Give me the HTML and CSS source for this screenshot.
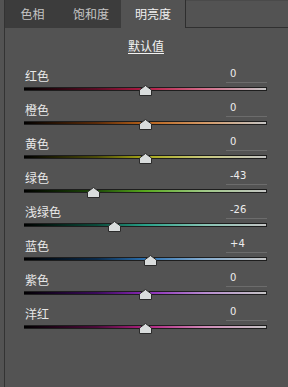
FILE: index.html
```html
<!DOCTYPE html>
<html lang="zh-CN">
    <head>
        <meta charset="UTF-8">
        <meta name="viewport" content="width=device-width, initial-scale=1.0">
        <link rel="stylesheet" href="styles.css">
        <title>HSL</title>
    </head>
    <body>
        <div class="panel">
            <div class="tabs">
                <div class="tab tab-hue">色相</div>
                <div class="tab tab-sat">饱和度</div>
                <div class="tab tab-lum active">明亮度</div>
                <div class="tab-rest"></div>
            </div>

            <div class="content">
                <div class="default"><span>默认值</span></div>

                <div class="row">
                    <div class="row-head"><span class="label">红色</span><span class="value">0</span></div>
                    <div class="track red"><svg class="thumb" style="left:50%" width="13" height="11"><path d="M6.5 0.5 L12.5 5 L12.5 10.5 L0.5 10.5 L0.5 5 Z"/></svg></div>
                </div>
                <div class="row">
                    <div class="row-head"><span class="label">橙色</span><span class="value">0</span></div>
                    <div class="track orange"><svg class="thumb" style="left:50%" width="13" height="11"><path d="M6.5 0.5 L12.5 5 L12.5 10.5 L0.5 10.5 L0.5 5 Z"/></svg></div>
                </div>
                <div class="row">
                    <div class="row-head"><span class="label">黄色</span><span class="value">0</span></div>
                    <div class="track yellow"><svg class="thumb" style="left:50%" width="13" height="11"><path d="M6.5 0.5 L12.5 5 L12.5 10.5 L0.5 10.5 L0.5 5 Z"/></svg></div>
                </div>
                <div class="row">
                    <div class="row-head"><span class="label">绿色</span><span class="value">-43</span></div>
                    <div class="track green"><svg class="thumb" style="left:28.5%" width="13" height="11"><path d="M6.5 0.5 L12.5 5 L12.5 10.5 L0.5 10.5 L0.5 5 Z"/></svg></div>
                </div>
                <div class="row">
                    <div class="row-head"><span class="label">浅绿色</span><span class="value">-26</span></div>
                    <div class="track aqua"><svg class="thumb" style="left:37%" width="13" height="11"><path d="M6.5 0.5 L12.5 5 L12.5 10.5 L0.5 10.5 L0.5 5 Z"/></svg></div>
                </div>
                <div class="row">
                    <div class="row-head"><span class="label">蓝色</span><span class="value">+4</span></div>
                    <div class="track blue"><svg class="thumb" style="left:52%" width="13" height="11"><path d="M6.5 0.5 L12.5 5 L12.5 10.5 L0.5 10.5 L0.5 5 Z"/></svg></div>
                </div>
                <div class="row">
                    <div class="row-head"><span class="label">紫色</span><span class="value">0</span></div>
                    <div class="track purple"><svg class="thumb" style="left:50%" width="13" height="11"><path d="M6.5 0.5 L12.5 5 L12.5 10.5 L0.5 10.5 L0.5 5 Z"/></svg></div>
                </div>
                <div class="row">
                    <div class="row-head"><span class="label">洋红</span><span class="value">0</span></div>
                    <div class="track magenta"><svg class="thumb" style="left:50%" width="13" height="11"><path d="M6.5 0.5 L12.5 5 L12.5 10.5 L0.5 10.5 L0.5 5 Z"/></svg></div>
                </div>
            </div>
        </div>
    </body>
</html>
```

FILE: styles.css
```css
html, body {
    height: 100%;
}

body {
    font-family: "Noto Sans CJK SC", "Noto Sans", sans-serif;
    background: #535353;
    margin: 0;
    padding-left: 4px;
    box-sizing: border-box;
}

.panel {
    height: 100%;
    border-left: 1px solid #333;
}

.tabs {
    display: flex;
    height: 28px;
}

.tab {
    background: #3c3c3c;
    color: #c4c4c4;
    font-size: 12px;
    line-height: 28px;
    text-align: center;
    padding-bottom: 2px;
    box-sizing: border-box;
}

.tab-hue {
    width: 56px;
    padding-right: 1px;
}

.tab-sat {
    width: 60px;
}

.tab-lum {
    width: 65px;
}

.tab.active {
    background: #535353;
    color: #f0f0f0;
    border-right: 1px solid #2e2e2e;
}

.tab-rest {
    flex: 1;
    border-bottom: 1px solid #303030;
    border-top: 1px solid #4a4a4a;
    box-sizing: border-box;
}

.content {
    padding: 10px 21px 0 19px;
}

.default {
    text-align: center;
    font-size: 12px;
    line-height: 16px;
    color: #f2f2f2;
    margin-bottom: 13px;
    padding-left: 1px;
}

.default span {
    text-decoration: underline;
    text-underline-offset: 2px;
}

.row {
    height: 34px;
}

.row-head {
    display: flex;
    justify-content: space-between;
    align-items: center;
    height: 16px;
}

.label {
    font-size: 12px;
    color: #e8e8e8;
    padding-left: 1px;
}

.value {
    width: 41px;
    height: 16px;
    padding-left: 4px;
    font-family: "DejaVu Sans", sans-serif;
    font-size: 10px;
    line-height: 14px;
    color: #ededed;
    border-bottom: 1px solid #6c6c6c;
    box-sizing: border-box;
}

.track {
    position: relative;
    height: 4px;
    margin-top: 4px;
    border-top: 1px solid #1e1e1e;
    border-bottom: 1px solid #1e1e1e;
    border-right: 1px solid #222;
    box-sizing: border-box;
}

.thumb {
    position: absolute;
    top: -3px;
    margin-left: -6px;
}

.thumb path {
    fill: #d9dcdc;
    stroke: #2a2a2a;
    stroke-width: 1;
}

.red {
    background: linear-gradient(to right, #000 0%, #1a0308 8%, #5c0c24 30%, #b41a44 50%, #d4708c 75%, #c4c4c4 100%);
}

.orange {
    background: linear-gradient(to right, #000 0%, #1a0c02 8%, #5a2a08 30%, #b8621a 50%, #d49a68 75%, #c4c4c4 100%);
}

.yellow {
    background: linear-gradient(to right, #000 0%, #141402 8%, #4c4c08 30%, #a8a818 50%, #c8c880 75%, #c4c4c4 100%);
}

.green {
    background: linear-gradient(to right, #000 0%, #081402 8%, #1e4a08 30%, #58a81e 50%, #a0c888 75%, #c4c4c4 100%);
}

.aqua {
    background: linear-gradient(to right, #000 0%, #02140e 8%, #0a4a3a 30%, #28a088 50%, #88c4b4 75%, #c4c4c4 100%);
}

.blue {
    background: linear-gradient(to right, #000 0%, #020c16 8%, #0a2a4a 30%, #2a70b0 50%, #88aed0 75%, #c4c4c4 100%);
}

.purple {
    background: linear-gradient(to right, #000 0%, #10021a 8%, #3a0a5a 30%, #8a28b8 50%, #b88cd0 75%, #c4c4c4 100%);
}

.magenta {
    background: linear-gradient(to right, #000 0%, #160210 8%, #4c0a3a 30%, #b02080 50%, #d08cb8 75%, #c4c4c4 100%);
}
```
